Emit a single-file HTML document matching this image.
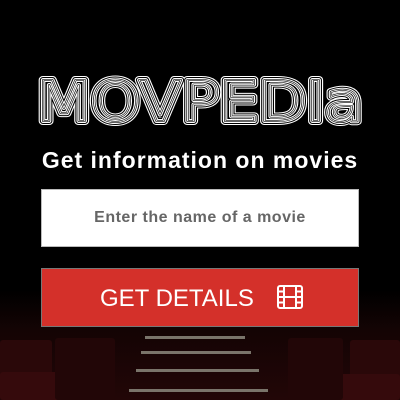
<!DOCTYPE html>
<html><head><style>
html,body{margin:0;padding:0;width:400px;height:400px;overflow:hidden;background:#000}
body{position:relative;font-family:"Liberation Sans",sans-serif}
.bg{position:absolute;left:0;top:0;width:400px;height:400px;background:linear-gradient(#000 0,#000 290px,#140404 330px,#220607 400px)}
.seat{position:absolute;border-radius:3px}
.step{position:absolute;height:3px;background:#7a746a}
.sub{position:absolute;left:0;width:400px;top:147px;text-align:center;color:#fff;font-weight:bold;font-size:23px;letter-spacing:1px}
.inp{position:absolute;left:41px;top:189px;width:316px;height:56px;background:#fff;border:1px solid #bbb;text-align:center;line-height:56px;color:#666;font-size:16px;font-weight:bold;letter-spacing:0.5px}
.btn{position:absolute;left:41px;top:268px;width:316px;height:57px;background:#d4302a;border:1px solid #777;color:#fff;font-family:"Liberation Sans",sans-serif;font-size:24px;line-height:57px}
.btn span{position:absolute;left:58px;top:1px}
</style></head><body>
<div class="bg"></div>
<div class="seat" style="left:0;top:340px;width:52px;height:60px;background:#2a0809"></div>
<div class="seat" style="left:0;top:372px;width:85px;height:28px;background:#350a0c"></div>
<div class="seat" style="left:55px;top:338px;width:60px;height:62px;background:#220607"></div>
<div class="seat" style="left:350px;top:340px;width:50px;height:60px;background:#2a0809"></div>
<div class="seat" style="left:328px;top:374px;width:72px;height:26px;background:#350a0c"></div>
<div class="seat" style="left:288px;top:338px;width:55px;height:62px;background:#220607"></div>
<div class="step" style="left:145px;top:336px;width:100px"></div>
<div class="step" style="left:141px;top:351px;width:110px"></div>
<div class="step" style="left:136px;top:369px;width:123px"></div>
<div class="step" style="left:129px;top:389px;width:139px"></div>
<svg style="position:absolute;left:0;top:0" width="400" height="140">
<g font-family="DejaVu Sans" font-size="56" fill="none" stroke-linejoin="round">
<text x="37" y="121" textLength="326" lengthAdjust="spacingAndGlyphs" stroke="#fff" stroke-width="8">MOVPEDIa</text>
<text x="37" y="121" textLength="326" lengthAdjust="spacingAndGlyphs" stroke="#000" stroke-width="6">MOVPEDIa</text>
<text x="37" y="121" textLength="326" lengthAdjust="spacingAndGlyphs" stroke="#fff" stroke-width="4">MOVPEDIa</text>
<text x="37" y="121" textLength="326" lengthAdjust="spacingAndGlyphs" stroke="#000" stroke-width="2">MOVPEDIa</text>
<text x="37" y="121" textLength="326" lengthAdjust="spacingAndGlyphs" stroke="#fff" stroke-width="0.8">MOVPEDIa</text>
</g></svg>
<div class="sub">Get information on movies</div>
<div class="inp">Enter the name of a movie</div>
<div class="btn"><span>GET DETAILS</span>
<svg style="position:absolute;left:235px;top:16px" width="26" height="24" viewBox="0 0 26 24" fill="none" stroke="#fff" stroke-width="2">
<rect x="1" y="1" width="24" height="22" rx="2"/><line x1="7" y1="1" x2="7" y2="23"/><line x1="19" y1="1" x2="19" y2="23"/>
<line x1="1" y1="6.5" x2="7" y2="6.5"/><line x1="1" y1="12" x2="25" y2="12"/><line x1="1" y1="17.5" x2="7" y2="17.5"/>
<line x1="19" y1="6.5" x2="25" y2="6.5"/><line x1="19" y1="17.5" x2="25" y2="17.5"/></svg>
</div>
</body></html>
